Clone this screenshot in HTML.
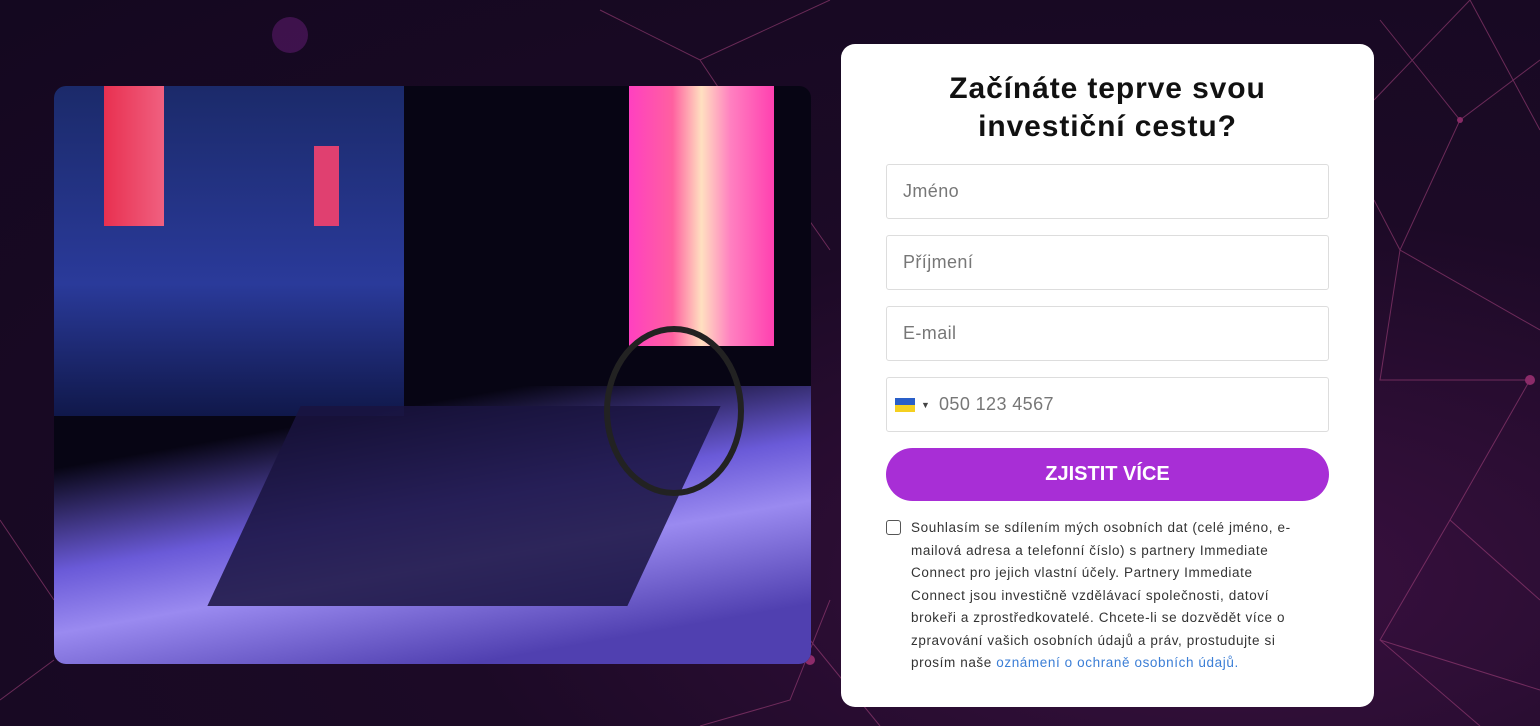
<!DOCTYPE html>
<html><head><meta charset="utf-8"><style>
*{margin:0;padding:0;box-sizing:border-box}
body{width:1540px;height:726px;overflow:hidden;position:relative;font-family:"Liberation Sans",sans-serif;background:radial-gradient(ellipse at 80% 80%,#3a1040 0%,#1c0a26 45%,#140820 100%)}
.net{position:absolute;left:0;top:0}
.img{position:absolute;left:54px;top:86px;width:757px;height:578px;border-radius:12px;overflow:hidden;background:#070514}
.card{position:absolute;left:841px;top:44px;width:533px;height:663px;background:#fff;border-radius:14px}
h1{position:absolute;left:0;width:533px;top:26px;text-align:center;font-size:30px;letter-spacing:0.9px;line-height:38px;font-weight:bold;color:#111}
.in{position:absolute;left:45px;width:443px;height:55px;border:1px solid #ddd;border-radius:3px;font-size:18px;color:#777;padding:16px 16px;line-height:21px;letter-spacing:0.4px}
.btn{position:absolute;left:45px;top:404px;width:443px;height:53px;border-radius:27px;background:#a82ed6;color:#fff;font-weight:bold;font-size:20px;text-align:center;line-height:53px}
.cb{position:absolute;left:45px;top:476px;width:15px;height:15px;border:1.5px solid #555;border-radius:3px}
.txt{position:absolute;left:70px;top:473px;width:440px;font-size:13.5px;letter-spacing:0.6px;line-height:22.5px;color:#333;white-space:nowrap}
.txt a{color:#3b7ed6;text-decoration:none}
</style></head><body>
<svg class="net" width="1540" height="726" stroke="#a0407a" stroke-width="1" opacity="0.6" fill="none">
<path d="M600 10 L700 60 L830 0 M700 60 L760 150 L830 250 M1380 20 L1460 120 L1540 60 M1460 120 L1400 250 L1540 330 M1400 250 L1380 380 L1530 380 L1450 520 L1540 600 M1450 520 L1380 640 L1480 726 M1380 640 L1540 690 M1470 0 L1540 130 M830 600 L790 700 L700 726 M810 640 L880 726 M0 520 L54 600 M0 700 L54 660 M1374 100 L1470 0 M1400 250 L1374 200"/>
<circle cx="290" cy="35" r="18" fill="#5a1a6a" stroke="none"/>
<circle cx="1530" cy="380" r="5" fill="#d04090" stroke="none"/>
<circle cx="1460" cy="120" r="3" fill="#d04090" stroke="none"/>
<circle cx="810" cy="660" r="5" fill="#d04090" stroke="none"/>
</svg>
<div class="img">
<div style="position:absolute;left:0;top:0;width:350px;height:330px;background:linear-gradient(180deg,#1b2a6a,#2a3a9a 60%,#10184a)"></div>
<div style="position:absolute;left:50px;top:0;width:60px;height:140px;background:linear-gradient(90deg,#e83050,#f06080)"></div>
<div style="position:absolute;left:260px;top:60px;width:25px;height:80px;background:#e04070"></div>
<div style="position:absolute;left:575px;top:0;width:145px;height:260px;background:linear-gradient(90deg,#ff40c0,#ff60a0 30%,#ffe0c0 50%,#ff80c0 70%,#ff40b0)"></div>
<div style="position:absolute;left:0;top:300px;width:757px;height:280px;background:linear-gradient(170deg,transparent 20%,#6a5ad8 45%,#9a8af0 60%,#5040b0 85%)"></div>
<div style="position:absolute;left:200px;top:320px;width:420px;height:200px;background:#1a1440;transform:skewX(-25deg);opacity:.85"></div>
<div style="position:absolute;left:550px;top:240px;width:140px;height:170px;border:6px solid #222;border-radius:50%"></div>
</div>
<div class="card">
<h1>Začínáte teprve svou<br>investiční cestu?</h1>
<div class="in" style="top:120px">Jméno</div>
<div class="in" style="top:191px">Příjmení</div>
<div class="in" style="top:262px">E-mail</div>
<div class="in" style="top:333px;padding-left:52px">
<span style="position:absolute;left:8px;top:20px;width:20px;height:14px;background:linear-gradient(#2a5fc8 50%,#f5d020 50%)"></span>
<span style="position:absolute;left:34px;top:17px;font-size:9px;color:#444">▼</span>050 123 4567</div>
<div class="btn">ZJISTIT VÍCE</div>
<div class="cb"></div>
<div class="txt">Souhlasím se sdílením mých osobních dat (celé jméno, e-<br>mailová adresa a telefonní číslo) s partnery Immediate<br>Connect pro jejich vlastní účely. Partnery Immediate<br>Connect jsou investičně vzdělávací společnosti, datoví<br>brokeři a zprostředkovatelé. Chcete-li se dozvědět více o<br>zpravování vašich osobních údajů a práv, prostudujte si<br>prosím naše <a>oznámení o ochraně osobních údajů.</a></div>
</div>
</body></html>
